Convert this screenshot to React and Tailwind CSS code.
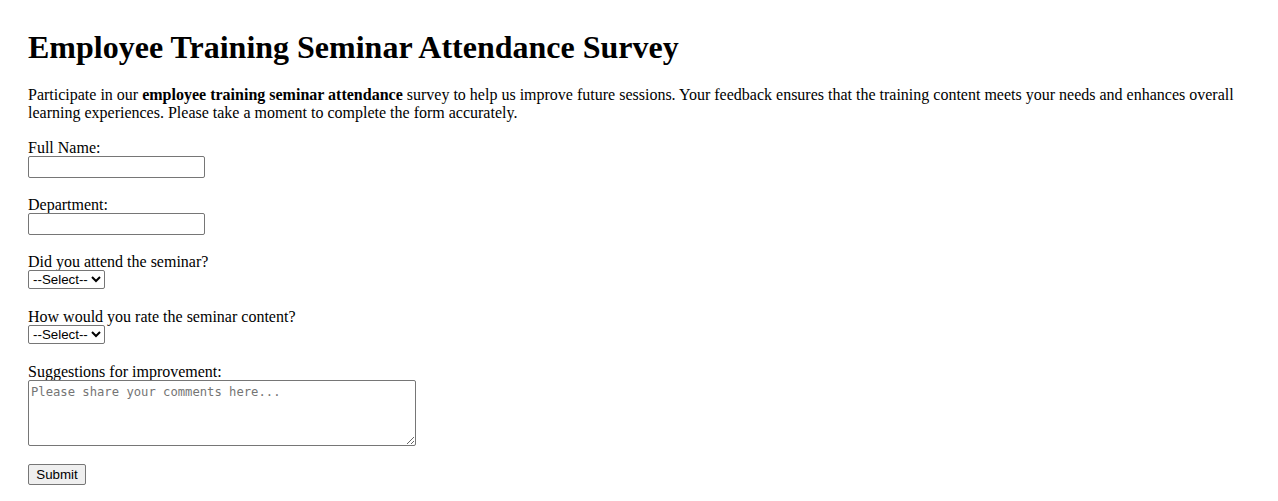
export default function App() {
  return (
    <div className="min-h-screen bg-white text-black px-[28px] pt-[29px] font-['Liberation_Serif',serif] text-[16px] leading-[18px]">
      <h1 className="text-[32px] leading-[37px] font-bold">Employee Training Seminar Attendance Survey</h1>
      <p className="mt-[20px] leading-[18.4px]">
        Participate in our <strong>employee training seminar attendance</strong> survey to help us improve future
        sessions. Your feedback ensures that the training content meets your needs and enhances overall learning
        experiences. Please take a moment to complete the form accurately.
      </p>
      <form className="mt-[15px] flex flex-col items-start" onSubmit={(e) => e.preventDefault()}>
        <label htmlFor="name" className="block h-[18px] leading-[20px]">Full Name:</label>
        <input
          id="name"
          type="text"
          className="w-[177px] h-[22px] border border-[#767676] rounded-[2px] px-[2px] font-['Liberation_Sans',sans-serif] text-[13.33px]"
        />

        <label htmlFor="dept" className="block h-[18px] leading-[20px] mt-[17px]">Department:</label>
        <input
          id="dept"
          type="text"
          className="w-[177px] h-[22px] border border-[#767676] rounded-[2px] px-[2px] font-['Liberation_Sans',sans-serif] text-[13.33px]"
        />

        <label htmlFor="attend" className="block h-[18px] leading-[20px] mt-[17px]">Did you attend the seminar?</label>
        <select
          id="attend"
          className="w-[77px] h-[19px] border border-[#767676] rounded-[2px] font-['Liberation_Sans',sans-serif] text-[13.33px] leading-[15px]"
        >
          <option>--Select--</option>
          <option>Yes</option>
          <option>No</option>
        </select>

        <label htmlFor="rate" className="block h-[18px] leading-[20px] mt-[18px]">How would you rate the seminar content?</label>
        <select
          id="rate"
          className="w-[77px] h-[19px] border border-[#767676] rounded-[2px] font-['Liberation_Sans',sans-serif] text-[13.33px] leading-[15px]"
        >
          <option>--Select--</option>
          <option>Excellent</option>
          <option>Good</option>
          <option>Average</option>
          <option>Poor</option>
        </select>

        <label htmlFor="sugg" className="block h-[18px] leading-[20px] mt-[18px]">Suggestions for improvement:</label>
        <textarea
          id="sugg"
          placeholder="Please share your comments here..."
          className="w-[388px] h-[66px] border border-[#767676] rounded-[2px] px-[2px] pt-[3px] font-['DejaVu_Sans_Mono',monospace] text-[12.2px] leading-[16px] placeholder:text-[#757575]"
        />

        <button
          type="submit"
          className="mt-[18px] w-[58px] h-[21px] bg-[#efefef] border border-[#767676] rounded-[2px] font-['Liberation_Sans',sans-serif] text-[13.33px] leading-[15px]"
        >
          Submit
        </button>
      </form>
    </div>
  );
}
